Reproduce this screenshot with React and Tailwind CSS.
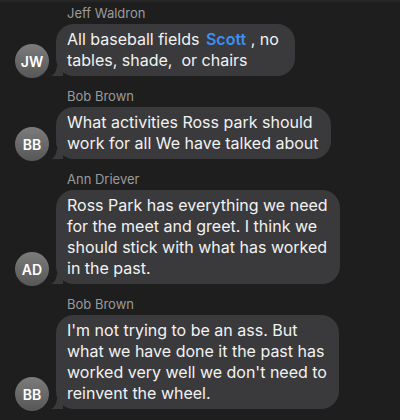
const messages = [
  {
    name: "Jeff Waldron",
    initials: "JW",
    lines: [
      <>
        All baseball fields <span className="ml-[2px] font-semibold text-[#3d8ef0]">Scott</span> , no{" "}
      </>,
      "tables, shade,  or chairs",
    ],
  },
  {
    name: "Bob Brown",
    initials: "BB",
    lines: ["What activities Ross park should", "work for all We have talked about"],
  },
  {
    name: "Ann Driever",
    initials: "AD",
    lines: [
      "Ross Park has everything we need",
      "for the meet and greet. I think we",
      "should stick with what has worked",
      "in the past.",
    ],
  },
  {
    name: "Bob Brown",
    initials: "BB",
    lines: [
      "I'm not trying to be an ass. But",
      "what we have done it the past has",
      "worked very well we don't need to",
      "reinvent the wheel.",
    ],
  },
];

const Avatar = ({ initials }) => (
  <div className="w-[34px] h-[34px] shrink-0 rounded-full bg-gradient-to-b from-[#7c7c7c] to-[#575757] flex items-center justify-center text-white text-[14px] font-semibold -mb-[2px]">
    {initials}
  </div>
);

const Bubble = ({ lines }) => (
  <div className="relative w-fit">
    <svg
      className="absolute -left-[5px] bottom-0"
      width="12"
      height="14"
      viewBox="0 0 12 14"
    >
      <path d="M12 0 L12 14 L0 14 Q5 12 6 4 Z" fill="#3a3a3c" />
    </svg>
    <div className="relative bg-[#3a3a3c] rounded-[18px] pl-[11px] pr-[12px] py-[5px] text-[16px] leading-[21px] text-[#f2f2f2] whitespace-pre">
      {lines.map((l, i) => (
        <div key={i}>{l}</div>
      ))}
    </div>
  </div>
);

export default function App() {
  return (
    <div
      className="w-[400px] h-[420px] bg-[#1e1e1e] border-t-2 border-[#262626] overflow-hidden pt-[3px] flex flex-col gap-[12px]"
      style={{ fontFamily: "Inter, 'Liberation Sans', sans-serif" }}
    >
      {messages.map((m, i) => (
        <div key={i} className="flex flex-col">
          <div className="pl-[67px] text-[13px] leading-[16px] text-[#9b9b9b] mb-[3px]">
            {m.name}
          </div>
          <div className="flex items-end gap-[7px] pl-[15px]">
            <Avatar initials={m.initials} />
            <Bubble lines={m.lines} />
          </div>
        </div>
      ))}
    </div>
  );
}
